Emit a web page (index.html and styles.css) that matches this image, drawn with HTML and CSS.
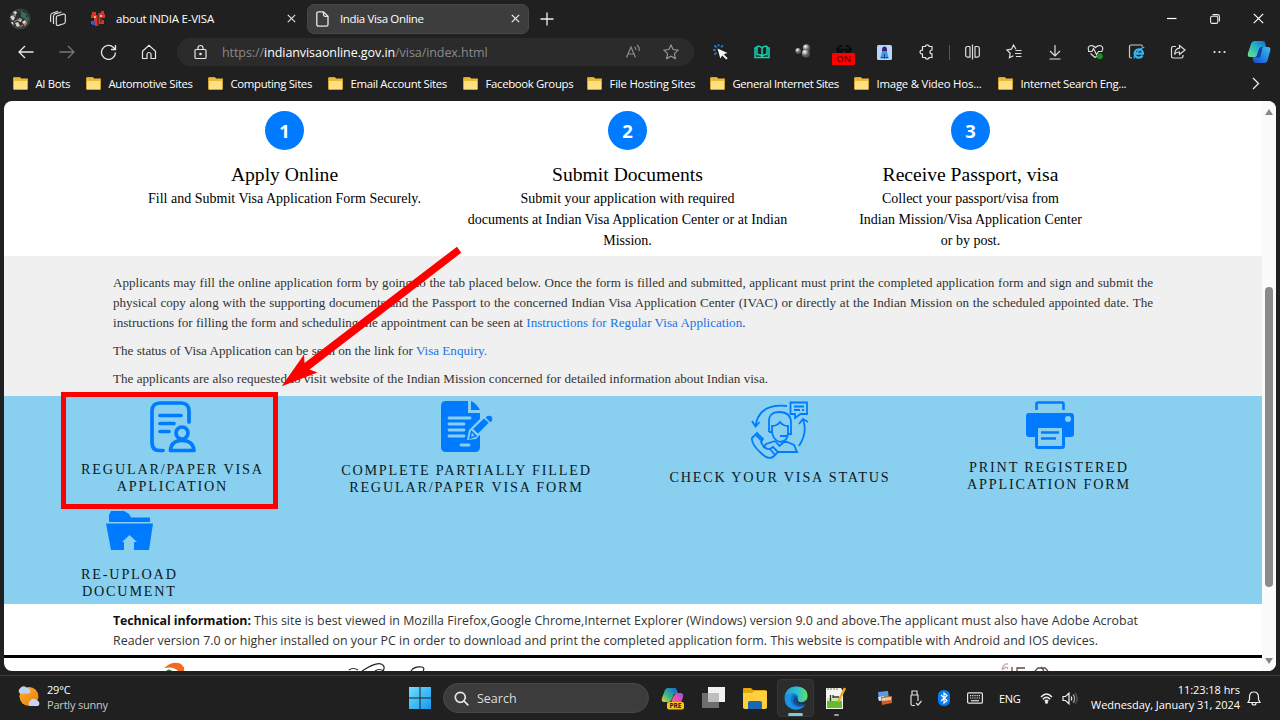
FILE: index.html
```html
<!DOCTYPE html>
<html lang="en">
<head>
<meta charset="utf-8">
<title>India Visa Online</title>
<link rel="stylesheet" href="styles.css">
</head>
<body>
<div class="desktop">
<header class="tabs">
  <svg class="avatar" width="22" height="22" viewBox="0 0 22 22"><circle cx="11" cy="11" r="10.5" fill="#35423b"/><path d="M3 6l5-4 3 3 4-3 4 5-2 3 3 3-5 5-5-2-5 2-3-4 2-3z" fill="#26322e"/><path d="M1 9l3-2 2 3-2 3zM6 15l3-1 2 4-3 1zM13 14l3-2 2 3-2 3zM10 10l3 1-1 3-3-1zM4 4l3-1 1 2-2 2zM2 14l2 0 1 3-2-1z" fill="#d9d4d4"/><path d="M12 3l6 3-2 5-4-2zM16 9l4 1-1 4-3-1z" fill="#386c55"/><path d="M3 7l4 1M8 12l4-1M15 17l3-3M5 14l3-2M11 19l3-2" stroke="#b8685f" stroke-width="1.3"/></svg>
  <svg class="spaces" width="18" height="18" viewBox="0 0 18 18" fill="none" stroke="#ddd" stroke-width="1.2"><path d="M8 6l6-1.800q2.300-.5 2.300 1.500v6q0 1.500-1.500 2l-5.300 1.700q-2.200.5-2.200-1.700V8q0-1.600.7-2z"/><path d="M4.500 14V6.500q0-2 1.700-2.700L12.500 2M1.600 12V6q0-2.200 1.700-2.800L9 1.300"/></svg>
  <div class="tab">
    <svg width="16" height="16" viewBox="0 0 16 16"><path d="M2 1h4v3h2V2h3V0h3v3h1v4h-3v2h2v4h-5v2H5v-2H1v-3h3V7H1V4h1z" fill="#d6362d"/><path d="M4 5h2v2H4zM10 4h2v2h-2z" fill="#ffbc65"/><path d="M2 11h3v3H2z" fill="#3155b8"/><path d="M8 0v16M11 6v5" stroke="#222" stroke-width="1"/></svg>
    <span class="label t1">about INDIA E-VISA</span>
    <svg class="x" width="9" height="9" viewBox="0 0 9 9"><path d="M.8.8l7.400 7.400M8.200.8L.8 8.200" stroke="#ddd" stroke-width="1.200"/></svg>
  </div>
  <div class="tab active">
    <svg width="13" height="16" viewBox="0 0 13 16" fill="none" stroke="#e8e8e8" stroke-width="1.300"><path d="M2.500.8H7.500L12 5.300V13.500q0 1.700-1.700 1.700H2.500Q.8 15.200.8 13.500v-11Q.8.8 2.500.8zM7.500.8v3Q7.500 5.300 9 5.300h3"/></svg>
    <span class="label t2">India Visa Online</span>
    <svg class="x" width="9" height="9" viewBox="0 0 9 9"><path d="M.8.8l7.400 7.400M8.200.8L.8 8.200" stroke="#eee" stroke-width="1.200"/></svg>
  </div>
  <svg class="plus" width="14" height="14" viewBox="0 0 14 14"><path d="M7 .5v13M.5 7h13" stroke="#eee" stroke-width="1.300"/></svg>
  <div class="win">
    <svg width="10" height="10" viewBox="0 0 10 10"><path d="M0 4.500h9.500" stroke="#fff" stroke-width="1.200"/></svg>
    <svg width="10" height="10" viewBox="0 0 10 10" fill="none" stroke="#eee" stroke-width="1.100"><rect x=".6" y="2.200" width="7.200" height="7.200" rx="1.500"/><path d="M2.500.6H7.500Q9.400.6 9.400 2.500V7.500"/></svg>
    <svg width="11" height="11" viewBox="0 0 11 11"><path d="M.8.8l9.400 9.400M10.200.8L.8 10.200" stroke="#fff" stroke-width="1.200"/></svg>
  </div>
</header>

<div class="toolbar">
  <div class="ic"><svg width="16" height="14" viewBox="0 0 16 14" fill="none" stroke="#e6e6e6" stroke-width="1.300"><path d="M15.500 7H1M7 1L1 7l6 6"/></svg></div>
  <div class="ic"><svg width="16" height="14" viewBox="0 0 16 14" fill="none" stroke="#777" stroke-width="1.300"><path d="M.5 7H15M9 1l6 6-6 6"/></svg></div>
  <div class="ic"><svg width="17" height="17" viewBox="0 0 17 17" fill="none" stroke="#e6e6e6" stroke-width="1.300"><path d="M15.500 8.500a7 7 0 1 1-2-5L15.500 5.500M15.500 1v4.500H11"/></svg></div>
  <div class="ic"><svg width="16" height="16" viewBox="0 0 16 16" fill="none" stroke="#e6e6e6" stroke-width="1.200"><path d="M1.500 7.200L8 1.300l6.500 5.900V14.500H10V10.500a2 2 0 0 0-4 0v4H1.500z"/></svg></div>
  <div class="address">
    <svg width="13" height="16" viewBox="0 0 13 16" fill="none" stroke="#e6e6e6" stroke-width="1.200"><rect x="1" y="5.500" width="11" height="9" rx="1"/><path d="M4 5.500V4a2.500 2.500 0 0 1 5 0v1.500"/><circle cx="6.500" cy="10" r=".7" fill="#fff"/></svg>
    <span class="url">https://<b>indianvisaonline.gov.in</b>/visa/index.html</span>
    <svg class="read" width="16" height="16" viewBox="0 0 16 16" fill="none" stroke="#8d8d8d" stroke-width="1.200"><path d="M1.500 13.500L6 3 10.500 13.500M3 10h6M9.500 3q1.500 1.200 1.300 3M12 1q3 2.500 2 6"/></svg>
    <svg width="16" height="16" viewBox="0 0 16 16" fill="none" stroke="#999" stroke-width="1.100"><path d="M8 1l2.100 4.600 5 .6-3.700 3.400 1 5L8 12.200l-4.400 2.400 1-5L.9 6.200l5-.6z"/></svg>
  </div>
  <div class="ic"><svg width="16" height="16" viewBox="0 0 16 16"><path d="M4.500 4.500l10 4.500-3.800 1.200 4 4-1.500 1.300-4-4L7.300 14.500z" fill="#f2f5fa"/><path d="M5.500 .5v2.300M1.500 1.500l2 2M.3 6h2.500M1.500 10.500l2-2M9.800 1.500L8 3.300" stroke="#2888e5" stroke-width="2" stroke-dasharray="1.600 .4"/></svg></div>
  <div class="ic"><svg width="16" height="14" viewBox="0 0 16 14" fill="none" stroke="#17cfb1" stroke-width="1.500"><path d="M8 3v8M8 3Q6 .7 3 1.500V9.500Q6 9 8 11.300Q10 9 13 9.500V1.500Q10 .7 8 3M2.500 3H1v9.500h14V3h-1.500"/></svg></div>
  <div class="ic"><svg width="16" height="16" viewBox="0 0 16 16"><defs><radialGradient id="ball" cx=".35" cy=".3"><stop offset="0" stop-color="#fff"/><stop offset="1" stop-color="#555"/></radialGradient></defs><circle cx="3.200" cy="7" r="2.900" fill="url(#ball)"/><circle cx="11.500" cy="4" r="3.700" fill="url(#ball)"/><circle cx="10.800" cy="9.500" r="4" fill="url(#ball)"/></svg></div>
  <div class="ic"><div class="on"><svg width="16" height="9" viewBox="0 0 16 9" fill="none" stroke="#080808" stroke-width="1.500"><path d="M1 5l3.500-3.500L6 3M15 5l-3.500-3.500L10 3M1 5.500h5.500l-1 2.500h-3.500zM9.500 5.500H15L14 8h-3.500zM6.500 5.500h3"/></svg><span>ON</span></div></div>
  <div class="ic"><svg width="15" height="15" viewBox="0 0 15 15"><rect width="15" height="15" rx="1.500" fill="#b3d8fb"/><path d="M5 5q0-3.500 2.500-3.500T10 5v1.500H5z" fill="#39216b"/><path d="M5 6.500h5l1.800 7H3.200z" fill="#4596e6"/><path d="M7.500 9v4.500M4 12.500h2.500M8.500 12.500h2.500" stroke="#1b3f86"/></svg></div>
  <div class="ic"><svg width="16" height="16" viewBox="0 0 16 16" fill="none" stroke="#e4e4e4" stroke-width="1.200"><path d="M4.500 2.500H7.300a2 2 0 0 1 3.900 0H14V6q-2 0-2 1.900T14 9.800V13.500H11.200a2 2 0 0 1-3.900 0H4.500V10a2 2 0 1 1 0-3.900z"/></svg></div>
  <i class="sep"></i>
  <div class="ic"><svg width="15" height="16" viewBox="0 0 15 16" fill="none" stroke="#ddd" stroke-width="1.200"><path d="M5 2.500H2.500Q.7 2.500.7 4.300v7q0 1.800 1.800 1.800H5V2.500M10 2.500h2.500q1.800 0 1.800 1.800v7q0 1.800-1.800 1.800H10V2.500M7.500.5v15"/></svg></div>
  <div class="ic"><svg width="16" height="16" viewBox="0 0 16 16" fill="none" stroke="#ddd" stroke-width="1.200"><path d="M10 5.200L7.500 1 5.500 5.200.9 6l3.300 3.200-.8 4.600 4-2M9.500 6.500h6M9 9.500h6.500M10 12.500h5.500"/></svg></div>
  <div class="ic"><svg width="14" height="16" viewBox="0 0 14 16" fill="none" stroke="#ddd" stroke-width="1.200"><path d="M7 1v11M2 7l5 5 5-5M1.500 15h11"/></svg></div>
  <div class="ic"><svg width="17" height="16" viewBox="0 0 17 16" fill="none" stroke="#ddd" stroke-width="1.200"><path d="M2 7Q0 3.500 3 1.800 6 .8 8.500 3.500 11 .8 14 1.800 17 3.500 15 7M1 7.500h4l1.500-3 3 6 2-3H15.500M3.500 9.500l4.500 4 2-1.500"/><circle cx="12.800" cy="12.300" r="3" fill="#178f25" stroke="none"/></svg></div>
  <div class="ic"><svg width="17" height="16" viewBox="0 0 17 16" fill="none"><path d="M4 14H3Q1.500 14 1.500 12.500V2.500Q1.500 1 3 1h10Q14.500 1 14.500 2.500" stroke="#ccc" stroke-width="1.200"/><path d="M14.500 11.500A4.200 4.200 0 1 1 15 9.600H7.500" stroke="#35b6f1" stroke-width="2.200"/><path d="M6.500 14.500Q4.500 13 10 7.500T16 4" stroke="#35b6f1" stroke-width="1.200"/></svg></div>
  <div class="ic"><svg width="16" height="16" viewBox="0 0 16 16" fill="none" stroke="#ddd" stroke-width="1.200"><path d="M6 2.500H3.200Q1.500 2.500 1.500 4.200v8.100Q1.500 14 3.200 14h8.100q1.700 0 1.700-1.700V11M9.500 1.500l5.500 4.500-5.500 4.500V8Q6 8 4.500 10.500 5 4.500 9.500 4.200z"/></svg></div>
  <div class="ic"><svg width="13" height="4" viewBox="0 0 13 4" fill="#eee"><circle cx="1.500" cy="2" r="1.100"/><circle cx="6.500" cy="2" r="1.100"/><circle cx="11.500" cy="2" r="1.100"/></svg></div>
  <div class="cop"><svg width="24" height="24" viewBox="0 0 24 24"><defs><linearGradient id="ca" x1="0" y1="1" x2="1" y2="0"><stop offset="0" stop-color="#72e583"/><stop offset=".5" stop-color="#27b5c5"/><stop offset="1" stop-color="#1469d9"/></linearGradient><linearGradient id="cb" x1="0" y1="1" x2="1" y2="0"><stop offset="0" stop-color="#1747d2"/><stop offset="1" stop-color="#36c2ed"/></linearGradient></defs><path d="M7.500 1H16q2 0 2.500 3l.5 3h-4q-2 0-2.500 2l-1.300 5q-.7 3-3.200 3H3Q0 17 1 13L4 4Q5 1 7.500 1z" fill="url(#ca)"/><path d="M16.500 7H21q3 0 2.300 3.500l-2.500 9Q20 23 17 23H9q-2.500 0-3-3l-.5-3H8q2.500 0 3.200-3l1.300-5z" fill="url(#cb)"/><path d="M12.500 8l3 .5-2.500 9h-4z" fill="#153eac"/></svg></div>
</div>

<nav class="bookmarks">
  <a><i class="folder"></i>AI Bots</a><a><i class="folder"></i>Automotive Sites</a><a><i class="folder"></i>Computing Sites</a><a><i class="folder"></i>Email Account Sites</a><a><i class="folder"></i>Facebook Groups</a><a class="wide"><i class="folder"></i>File Hosting Sites</a><a class="tight"><i class="folder"></i>General Internet Sites</a><a class="wide"><i class="folder"></i>Image &amp; Video Hos...</a><a><i class="folder"></i>Internet Search Eng...</a>
  <svg width="8" height="13" viewBox="0 0 8 13" fill="none" stroke="#eee" stroke-width="1.300"><path d="M1 1l5.500 5.500L1 12"/></svg>
</nav>

<div class="window">
<main class="page">
  <section class="steps">
    <div class="step"><b class="num">1</b><h2>Apply Online</h2><p>Fill and Submit Visa Application Form Securely.</p></div>
    <div class="step"><b class="num">2</b><h2>Submit Documents</h2><p>Submit your application with required<br>documents at Indian Visa Application Center or at Indian<br>Mission.</p></div>
    <div class="step"><b class="num">3</b><h2>Receive Passport, visa</h2><p>Collect your passport/visa from<br>Indian Mission/Visa Application Center<br>or by post.</p></div>
  </section>
  <section class="info">
    <p><span class="full">Applicants may fill the online application form by going to the tab placed below. Once the form is filled and submitted, applicant must print the completed application form and sign and submit the</span>
    <span class="full">physical copy along with the supporting documents and the Passport to the concerned Indian Visa Application Center (IVAC) or directly at the Indian Mission on the scheduled appointed date. The</span>
    <span class="full l3">instructions for filling the form and scheduling the appointment can be seen at <a>Instructions for Regular Visa Application</a>.</span></p>
    <p><span class="full l4">The status of Visa Application can be seen on the link for <a>Visa Enquiry.</a></span></p>
    <p><span class="full l5">The applicants are also requested to visit website of the Indian Mission concerned for detailed information about Indian visa.</span></p>
  </section>
  <section class="actions">
    <a class="act a1"><svg width="46" height="52" viewBox="0 0 46 52" fill="none" stroke="#007bff" stroke-width="3.700" stroke-linecap="round"><path d="M39 21V10Q39 2 31 2H10Q2 2 2 10V41Q2 49.500 9 49.500H13M10 14.500H31M10 22.500H24M10 30.500H19"/><circle cx="32" cy="32" r="6"/><path d="M20.500 49.500H44Q43 39.500 32 39.500T20.500 49.500z" stroke-linejoin="round"/></svg><span>REGULAR/PAPER VISA<br>APPLICATION</span></a>
    <a class="act a2"><svg width="52" height="52" viewBox="0 0 52 52"><path d="M5 0H27V12H39V46Q39 51 34 51H5Q0 51 0 46V5Q0 0 5 0zM30 0Q35 2 39 9H30z" fill="#007bff"/><path d="M8 17H29M8 23H23M8 29H23M8 35H23M20 44H28" stroke="#89cfef" stroke-width="2.800" stroke-linecap="round"/><path d="M26 39L28 29 43 14Q48 10 52 17L51 21 35 38z" fill="#89cfef"/><path d="M32 28L43 17.500 47.500 22 37 32.500z" fill="#007bff"/><circle cx="48" cy="18" r="3.300" fill="#007bff"/><path d="M30.500 30.500L35 35 29 37z" fill="none" stroke="#007bff" stroke-width="1.500"/><path d="M43 16L49 22" stroke="#89cfef" stroke-width="1.500"/></svg><span>COMPLETE PARTIALLY FILLED<br>REGULAR/PAPER VISA FORM</span></a>
    <a class="act a3"><svg width="58" height="58" viewBox="0 0 58 58" fill="none" stroke="#007bff" stroke-width="1.800"><path d="M36 5Q8 2 4.500 25M1 20l3.500 5.500L8.500 21M48 45Q57 31 52 19M48 23l4-5 5 3"/><path d="M40 1.500H56V13H49.500L44 17V13H39.500V1.500zM43 5.500H53M43 9H49M51 9h2"/><path d="M18 31V22Q17 11 28.500 11T40 22V33H37M18 31h3V25Q26 25 29 21 32 25 37 25V32Q37 40 29 41 22 39 21 31M37 35H29"/><path d="M24 40L15 43 12.500 47M34 40L43 44 46 51H26M24 40l4.500 5L34 40"/><path d="M1 37L6 32 12 38 10 41Q14 49 19 48L22 46 27 51 23 55Q18 60 10 52 0 43 1 37zM5 34l6 6M19 48l5 6"/></svg><span>CHECK YOUR VISA STATUS</span></a>
    <a class="act a4"><svg width="48" height="48" viewBox="0 0 48 48"><path d="M10.500 9V3Q10.500 1.500 12 1.500H36Q37.500 1.500 37.500 3V9" fill="none" stroke="#007bff" stroke-width="2.600"/><path d="M3 12H45Q48 12 48 15V33Q48 36 45 36H39V45Q39 48 36 48H12Q9 48 9 45V36H3Q0 36 0 33V15Q0 12 3 12z" fill="#007bff"/><rect x="12" y="27" width="24" height="18" fill="#89cfef"/><path d="M15 31.500H33M15 37.500H30" stroke="#007bff" stroke-width="2.600"/><circle cx="42" cy="18" r="3" fill="#89cfef"/></svg><span>PRINT REGISTERED<br>APPLICATION FORM</span></a>
    <a class="act a5"><svg width="48" height="40" viewBox="0 0 48 40"><path d="M3 11V4L5 0H18L23 3 25 6.500H44V11zM0 12.500H47L43 39H28V31H31L23.500 24 16 31H18V39H5z" fill="#007bff"/></svg><span>RE-UPLOAD<br>DOCUMENT</span></a>
  </section>
  <section class="tech">
    <span class="full f1"><b>Technical information:</b> This site is best viewed in Mozilla Firefox,Google Chrome,Internet Explorer (Windows) version 9.0 and above.The applicant must also have Adobe Acrobat</span>
    <span class="full f2">Reader version 7.0 or higher installed on your PC in order to download and print the completed application form. This website is compatible with Android and IOS devices.</span>
  </section>
  <footer class="logos">
    <svg class="g1" width="24" height="9" viewBox="0 0 24 9"><path d="M0 6Q9-2 17 2 21 5 20 9H14Q10 4 0 6z" fill="#f26a21"/><path d="M2 9Q5 6 8 9z" fill="#287b3f"/></svg>
    <svg class="g2" width="80" height="9" viewBox="0 0 80 9" fill="none" stroke="#222" stroke-width="1.200"><path d="M1 8Q5 5 10 8M14 9Q28 0 33 2 38 4 35 9M27 9q4-3 9 0M63 9Q66 4 74 5 77 6 75 9"/></svg>
    <svg class="g3" width="50" height="9" viewBox="0 0 50 9" fill="none" stroke="#5b4a40" stroke-width="1.300"><path d="M2 7Q4 1 8 2M2 8Q7 3 8 7" stroke="#c4aaa3"/><path d="M12 5v4M17 9V6H25M35 9l3-3h7l3 3M41 5l3 4"/></svg>
  </footer>
</main>
<div class="scroll"><i class="up"></i><i class="thumb"></i><i class="down"></i></div>
</div>

<footer class="taskbar">
  <div class="weather"><svg width="23" height="23" viewBox="0 0 23 23"><defs><linearGradient id="sun" x1="0" y1="0" x2="1" y2="1"><stop offset="0" stop-color="#ffb323"/><stop offset="1" stop-color="#e87813"/></linearGradient></defs><circle cx="12" cy="11.500" r="9.500" fill="url(#sun)"/><path d="M3 8.500a3 3 0 0 1 0-5A4 4 0 0 1 10 3a3 3 0 0 1 2 5.500z" fill="#bed0f3"/><path d="M13 21a3 3 0 0 1 0-5 4 4 0 0 1 7-.5A3 3 0 0 1 21 21z" fill="#c7d6f5"/></svg><div>29°C<br><span>Partly sunny</span></div></div>
  <svg class="start" width="22" height="22" viewBox="0 0 22 22"><defs><linearGradient id="st" x1="0" y1="0" x2="1" y2="1"><stop offset="0" stop-color="#6fe0ff"/><stop offset="1" stop-color="#1597f0"/></linearGradient></defs><path d="M0 0H10.500V10.500H0zM11.500 0H22V10.500H11.500zM0 11.500H10.500V22H0zM11.500 11.500H22V22H11.500z" fill="url(#st)"/></svg>
  <div class="search"><svg width="15" height="15" viewBox="0 0 15 15" fill="none" stroke="#e8e8e8" stroke-width="1.700"><circle cx="6.300" cy="6.300" r="5"/><path d="M10 10l4.300 4.300"/></svg>Search</div>
  <div class="apps">
    <svg width="23" height="23" viewBox="0 0 23 23"><defs><linearGradient id="p1" x1="0" y1="1" x2="1" y2="0"><stop offset="0" stop-color="#f4d03b"/><stop offset=".4" stop-color="#35ba83"/><stop offset="1" stop-color="#195edc"/></linearGradient><linearGradient id="p2" x1="0" y1="1" x2="1" y2="0"><stop offset="0" stop-color="#f18b3d"/><stop offset=".6" stop-color="#e54cb6"/><stop offset="1" stop-color="#9451ec"/></linearGradient></defs><path d="M7 1H15L17 6 13 7 10 14Q9 15 7 15H3Q0 15 1 11L4 3Q5 1 7 1z" fill="url(#p1)"/><path d="M15 6H19Q23 6 22 10L19 19H9L12 10z" fill="url(#p2)"/><rect x="6" y="15" width="17" height="7.500" rx="2" fill="#f7c521"/><text x="14.500" y="21.300" class="pre">PRE</text></svg>
    <svg width="23" height="22" viewBox="0 0 23 22"><path d="M6 0H23V15H6z" fill="#f1f1f1"/><path d="M0 6H17V21H0z" fill="#777" opacity=".9"/><path d="M6 6H17V15H6z" fill="#bebebe"/></svg>
    <svg width="24" height="21" viewBox="0 0 24 21"><path d="M0 1Q0 0 1 0H8L10 2H22Q24 2 24 4V20H0z" fill="#e4a50e"/><path d="M0 5H9L11 3H24V19Q24 21 22 21H2Q0 21 0 19z" fill="#ffcf3f"/><path d="M5 21V15Q5 13 7 13H17Q19 13 19 15V21z" fill="#1767b4"/></svg>
    <div class="edge"><svg width="24" height="24" viewBox="0 0 24 24"><defs><linearGradient id="e1" x1="0" y1="0" x2="1" y2="0"><stop offset="0" stop-color="#209ae4"/><stop offset=".6" stop-color="#2fc4c7"/><stop offset="1" stop-color="#69df62"/></linearGradient></defs><circle cx="12" cy="12" r="11.500" fill="#1572cb"/><path d="M.6 11Q2 .6 12 .5 23.500 1 23.500 10 23 16 17 16 13 16 14 13 15 8 9 7.500 3 7.500.6 11z" fill="url(#e1)"/><path d="M9 8Q5 13 8 18 12 23 20 20 15 25 8 23 0 20 1 12 3 7 9 8z" fill="#1b93de"/><path d="M14 13Q13 16 17 16.500 21 16.500 23.500 12.500V18L21.500 18.500Q18 19.500 14.500 17.500 11.500 15.500 12.500 12.500z" fill="#2c2c2c"/><path d="M10.500 10Q7 18 15 20 19 21 21.500 18.500 17 19.500 14 17 11 14.500 13 11z" fill="#174a93"/></svg><i></i></div>
    <div class="npp"><svg width="20" height="23" viewBox="0 0 20 23"><path d="M0 1H15L17 4V22H0z" fill="#f5f5ee"/><path d="M1 14H16V21H1z" fill="#62bd2a"/><path d="M1 11H16V14H1z" fill="#cce8ad"/><path d="M2 1v2M5 1v2M8 1v2M11 1v2" stroke="#777"/><path d="M4.500 8v6M7 8v3M7 10h6" stroke="#333" stroke-width="1.300"/><path d="M19 1L12 15" stroke="#efa72a" stroke-width="2.500"/></svg><i></i></div>
  </div>
  <div class="tray">
    <svg width="16" height="16" viewBox="0 0 16 16"><path d="M1 2l10-1 1 8-10 2z" fill="#5d9ae0"/><path d="M1 7l6-1v4l-5 1z" fill="#d7e3ef"/><path d="M4 7l11-1v7l-10 2z" fill="#d25b27"/><path d="M5 8l9-1v3l-9 1z" fill="#f3c99c"/></svg>
    <svg width="13" height="17" viewBox="0 0 13 17" fill="none" stroke="#ddd" stroke-width="1.200"><path d="M3 5V1h5v4M2 5h7v6M2 5v9q0 1.500 1.500 1.500H6M7 13l2 2 3.500-4"/></svg>
    <svg width="12" height="16" viewBox="0 0 12 16"><rect width="12" height="16" rx="5.500" fill="#0a7cf0"/><path d="M3 5l6 5.500L6 13V3l3 2.500L3 11" fill="none" stroke="#fff" stroke-width="1.200"/></svg>
    <svg class="kb" width="16" height="12" viewBox="0 0 16 12" fill="none" stroke="#e4e4e4" stroke-width="1.200"><rect x=".6" y=".8" width="14.800" height="10.400" rx="1"/><path d="M3 3.700h10M3 6h10" stroke-dasharray="1.200 1"/><path d="M4 8.700h8"/></svg>
    <span class="eng">ENG</span>
    <svg width="13" height="12" viewBox="0 0 13 12" fill="none" stroke="#eee" stroke-width="1.400"><path d="M1 5Q6.500-1 12 5"/><path d="M2.800 7.200q3.700-4 7.400 0M4.700 9.200q1.800-1.900 3.600 0"/><circle cx="6.500" cy="10.300" r=".8" fill="#fff"/></svg>
    <svg class="vol" width="16" height="13" viewBox="0 0 16 13" fill="none" stroke="#eee" stroke-width="1.200"><path d="M1 4.500h2.500L7 1.200v10.600L3.500 8.500H1zM9 4.500q1.500 2 0 4"/><path d="M11 2.500q3.500 4 0 8" stroke="#aaa"/><path d="M13 1q4.500 5.500 0 11" stroke="#555"/></svg>
  </div>
  <div class="clock">11:23:18 hrs<br>Wednesday, January 31, 2024</div>
  <svg width="14" height="15" viewBox="0 0 14 15" fill="none" stroke="#eee" stroke-width="1.200"><path d="M7 1Q2.500 1 2.500 6V8.500L1 11.500H13L11.500 8.500V6Q11.500 1 7 1zM5 12q0 2 2 2t2-2"/></svg>
</footer>
<div class="highlight"></div>
<svg class="arrow" width="190" height="145" viewBox="275 245 190 145"><path d="M457 246.700L461.300 252.700 309.500 369.500 317.500 372.500 281.700 386.200 304 354.500 304.500 363z" fill="#f00"/></svg>
</div>
</body>
</html>
```
FILE: styles.css
```css
* { box-sizing: border-box; }
body { margin: 0; font-family: "Open Sans", "Noto Sans", sans-serif; font-size: 11.5px; color: #fff; }
svg { display: block; flex: none; }
.desktop { position: relative; width: 1280px; height: 720px; overflow: hidden; background: #202020; display: flex; flex-direction: column; }

.tabs { height: 37px; display: flex; align-items: center; flex: none; padding-left: 9px; }
.avatar { margin-right: 18px; }
.spaces { margin-right: 16px; }
.tab { display: flex; align-items: center; height: 30px; width: 224px; padding: 0 11px 0 7px; }
.tab .label { margin-left: 10px; flex: 1; white-space: nowrap; letter-spacing: -.22px; }
.tab.active { width: 222px; background: #3d3d3d; border: 1px solid #484848; border-radius: 7px; padding: 0 8px; }
.tab.active .label { margin-left: 11px; letter-spacing: -.35px; }
.plus { margin-left: 11px; }
.win { margin-left: auto; padding-right: 16px; display: flex; align-items: center; gap: 33px; height: 34px; }

.toolbar { height: 30px; display: flex; align-items: center; flex: none; padding-left: 5.500px; }
.ic { width: 41.1px; display: flex; justify-content: center; flex: none; }
.address { width: 517px; height: 28px; margin: 0 6px 0 7.100px; border-radius: 14px; background: #2b2b2b; display: flex; align-items: center; padding: 0 15px 0 17px; flex: none; }
.url { margin-left: 15px; flex: 1; font-size: 12.500px; color: #8a8a8a; letter-spacing: -.07px; }
.url b { color: #fff; font-weight: 400; }
.read { margin-right: 22px; }
.sep { width: 1px; height: 15px; background: #555; margin: 0 2px 0 2.500px; }
.cop { margin-left: 7px; }
.on { width: 24px; height: 22px; display: flex; flex-direction: column; align-items: center; margin-top: 5px; }
.on span { background: #f00; color: #600; width: 23px; height: 12px; line-height: 12px; border-radius: 1px; text-align: center; font-size: 9.500px; font-weight: 600; }

.bookmarks { height: 33px; margin-bottom: 1px; flex: none; display: grid; grid-template-columns: 73px 122px 120px 135px 124px 123px 144px 144px 254px auto; padding-left: 13px; align-items: center; justify-content: start; }
.bookmarks a { display: flex; align-items: center; gap: 7.500px; white-space: nowrap; font-size: 11.400px; letter-spacing: -.34px; }
.bookmarks .wide { letter-spacing: -.22px; }
.bookmarks .tight { letter-spacing: -.42px; }
.folder { width: 15px; height: 13px; background: linear-gradient(#e8b934 0 3px, #ffdf81 3px); border-radius: 1px; clip-path: polygon(0 0, 45% 0, 55% 12%, 100% 12%, 100% 100%, 0 100%); border: 1px solid #cfa331; }

.window { margin: 0 4px; height: 570px; flex: none; background: #fff; border-radius: 8px; overflow: hidden; display: flex; }
.page { width: 1258px; font-family: "Liberation Serif", serif; color: #000; overflow: hidden; }
.steps { height: 155px; padding: 9.500px 0 0 109px; display: grid; grid-template-columns: repeat(3, 343px); }
.step { text-align: center; }
.num { display: block; width: 39px; height: 39px; margin: 0 auto; border-radius: 50%; background: #007bff; color: #fff; font: 700 18.500px/40px "Open Sans", sans-serif; }
.step h2 { margin: 13px 0 0; font-size: 19.600px; line-height: 24px; font-weight: 400; }
.step p { margin: 1px 0 0; font-size: 14px; line-height: 21px; white-space: nowrap; }
.info { height: 140px; background: #f0f0f0; color: #333; padding: 16.500px 109px; font-size: 13.100px; line-height: 20px; }
.info p { margin: 0 0 8px; }
.full { display: block; white-space: nowrap; text-align: justify; text-align-last: justify; width: 1040px; }
.l3 { width: 632.500px; }
.l4 { width: 374px; }
.l5 { width: 655px; }
.info a { color: #1a73e8; }
.actions { height: 208px; background: #89cfef; padding: 5px 77px 0; display: flex; flex-wrap: wrap; column-gap: 78.500px; align-content: flex-start; align-items: flex-start; }
.act { display: flex; flex-direction: column; align-items: center; font-size: 14.200px; line-height: 17px; letter-spacing: 1.800px; text-align: center; white-space: nowrap; color: #0b1a24; }
.act span { margin-top: 8px; margin-right: .2px; }
.a1 { width: 183px; height: 110px; }
.a2 { width: 250px; margin-left: -1px; }
.a2 span { margin-top: 9px; }
.a3 { width: 220px; }
.a3 span { margin-top: 10px; }
.a4 { width: 164px; margin-left: -1px; }
.a4 span { margin-top: 10px; margin-right: 1px; }
.a5 { width: 97px; }
.a5 span { margin-top: 15px; }
.tech { height: 51px; padding: 7px 109px 0; font: 12.400px/20px "Open Sans", sans-serif; color: #333; letter-spacing: .02px; }
.tech b { color: #111; letter-spacing: -.1px; }
.f1 { width: 1025px; }
.f2 { width: 985px; }
.logos { border-top: 3px solid #000; display: flex; padding: 4px 0 0 160px; height: 16px; align-items: flex-start; }
.g2 { margin-left: 160px; }
.g3 { margin-left: 572px; }
.scroll { width: 14px; background: #fafafa; display: flex; flex-direction: column; align-items: center; padding: 8px 0 7px; }
.up { border: 4px solid transparent; border-top: 0; border-bottom: 6px solid #888; }
.down { border: 4px solid transparent; border-bottom: 0; border-top: 6px solid #888; margin-top: auto; }
.thumb { width: 8px; height: 300px; border-radius: 4px; background: #8b8b8b; margin-top: 172px; }

.taskbar { margin-top: 4px; border-top: 1px solid #3d3d3d; height: 45px; display: flex; align-items: center; flex: none; padding-left: 17px; position: relative; }
.weather { display: flex; align-items: center; width: 392px; gap: 7px; line-height: 15px; font-size: 11px; letter-spacing: -.2px; margin-top: -3px; }
.weather span { color: #c8c8c8; }
.search { margin-left: 12px; width: 206px; height: 30px; border-radius: 15px; background: #3c3c3c; border: 1px solid #484848; display: flex; align-items: center; gap: 8px; padding-left: 10px; font-size: 12.500px; color: #ddd; }
.apps { display: flex; align-items: center; margin-left: 12px; gap: 18px; }
.pre { font: 700 6.500px "Open Sans", sans-serif; text-anchor: middle; fill: #222; }
.edge { width: 37px; height: 38px; border-radius: 4px; background: #2c2c2c; border: 1px solid #363636; display: flex; flex-direction: column; align-items: center; padding-top: 6px; gap: 3px; margin: 0 -6px 0 -8px; }
.edge i { width: 15px; height: 3px; border-radius: 2px; background: #76cdd6; }
.npp { display: flex; flex-direction: column; align-items: center; gap: 4px; padding-top: 6px; }
.npp i { width: 5px; height: 2px; border-radius: 1px; background: #999; }
.tray { display: flex; align-items: center; margin-left: 31px; gap: 16px; }
.kb { margin: 0 0 0 1px; }
.eng { font-size: 11px; letter-spacing: -.3px; }
.vol { margin-left: -7px; }
.eng + svg { margin-left: 3px; }
.clock { margin-left: auto; text-align: right; line-height: 15px; font-size: 11px; letter-spacing: -.05px; margin: -3px 7px 0 auto; white-space: nowrap; }
.clock + svg { margin-right: 19px; }
.highlight { position: absolute; left: 61px; top: 392px; width: 217px; height: 117px; border: 5.500px solid #f00; }
.arrow { position: absolute; left: 275px; top: 245px; }
```
